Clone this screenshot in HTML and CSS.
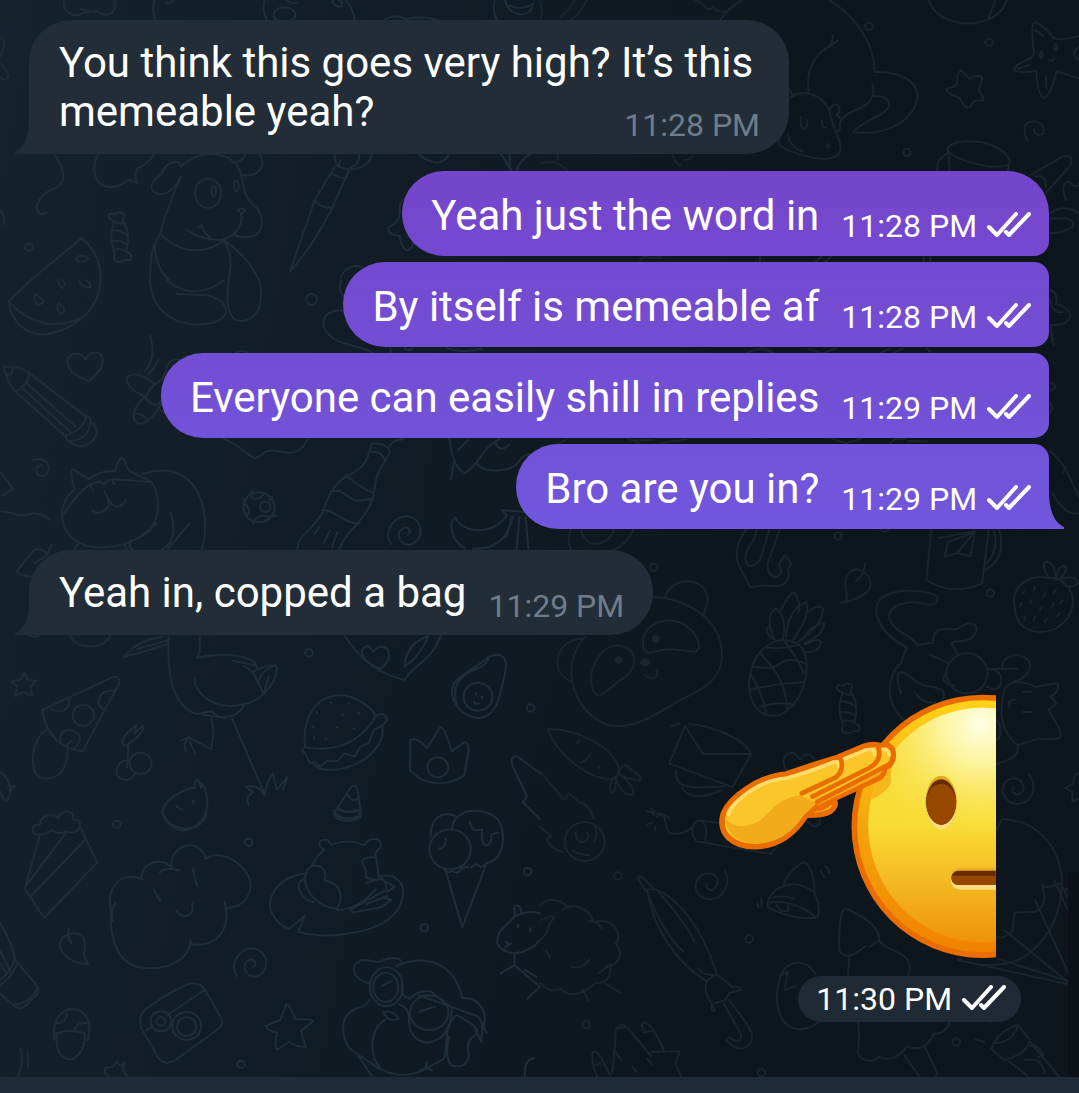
FILE: index.html
```html
<!DOCTYPE html>
<html lang="en">
<head>
    <meta charset="UTF-8">
    <meta name="viewport" content="width=device-width, initial-scale=1.0">
    <title>Chat</title>
    <link rel="stylesheet" href="styles.css">
</head>
<body>

<!-- wallpaper doodles -->
<svg class="wallpaper" viewBox="0 0 1079 1093" preserveAspectRatio="xMidYMid slice" aria-hidden="true">
    <defs>
        <path id="star" d="M0-34L11-12L36-10L18 9L24 35L-2 24L-26 36L-20 8L-37-8L-12-12Z"/>
        <path id="spiral" d="M-40 38C-62-8-22-52 14-44C60-32 56 34 14 40C-18 38-28-2 0-10C14-14 22 4 10 10"/>
        <circle id="dot" r="11"/>
        <path id="heart" d="M0-22C12-46 46-52 50-24C54 4 28 28 10 42C-22 34-56 10-52-20C-44-46-12-44 0-22Z"/>
        <path id="candy" d="M-16-46C-44-58-32-76-14-66C-4-82 22-70 8-54C8-50 6-48 12-42C28-16 26 16 18 44C42 56 38 78 16 68C-2 84-28 72-14 54C-12 48-18 46-18 40C-30 10-26-18-16-46M-16-46Q0-36 12-42M-22-20Q6-20 22-2M-24 14Q0 8 22 24M-18 40Q2 32 18 44"/>
    </defs>
    <g class="left" transform="scale(.3444 .3333)">
        <path d="M185 0C180 30 210 60 245 38L280 34C320 60 340 30 332 0M235 26Q265 40 280 32M448 0Q440 30 450 60M480 10Q496 10 504 0M768 0C762 20 766 40 775 60M830 0Q846 14 862 8M1030 60Q1026 24 1002 0"/>
        <ellipse cx="826" cy="44" rx="32" ry="22"/>
        <path d="M965 0Q966 20 990 20Q1000 8 984 0M1118 58Q1150 40 1180 58Q1220 44 1270 60M1436 0C1430 28 1436 46 1442 60M1466 0C1480 54 1536 54 1546 20M1480 16Q1510 34 1550 10"/>
        <path d="M0 112Q20 120 8 150L0 168M0 190Q24 210 24 234Q10 246 0 232M0 632Q20 650 8 674"/>
        <path d="M155 460C190 510 196 545 160 565C120 580 92 620 115 640Q124 646 134 638"/>
        <path d="M285 462C266 500 270 550 310 560Q345 566 370 540L398 548Q388 520 400 505Q432 490 448 462"/>
        <use href="#candy" x="348" y="710"/>
        <use href="#dot" x="84" y="742"/>
        <!-- dog -->
        <path d="M526 500C570 450 650 450 688 495C710 530 700 580 730 610C770 640 770 700 730 710Q700 714 684 706M526 500C520 470 480 490 470 520C430 550 430 580 470 582Q500 580 524 530M680 490Q710 480 712 462M754 462C776 500 750 530 704 526M526 530C500 590 480 640 465 700C500 740 570 780 650 722M540 688Q580 720 640 720C690 710 706 670 700 640L690 630Q700 622 712 630L700 644M575 682Q588 680 586 674Q590 700 610 712M465 700C430 760 440 800 435 840M450 740Q450 800 490 840M650 722C680 770 668 800 664 840M655 724Q720 770 752 840"/>
        <ellipse cx="604" cy="580" rx="38" ry="44"/>
        <ellipse cx="621" cy="574" rx="6" ry="16"/>
        <ellipse cx="686" cy="558" rx="6" ry="15"/>
        <!-- brush -->
        <path d="M972 462Q970 490 984 500L1010 508C1050 510 1075 490 1080 462M984 500Q985 480 990 480M1010 508Q1050 490 1042 462M972 500L914 600L842 815Q900 750 962 630L1012 514M965 520Q980 534 1006 534M914 600Q930 624 964 624"/>
        <path d="M1215 462Q1240 486 1272 488Q1300 480 1302 462M1455 462L1484 510M1480 462V500M1500 512Q1510 480 1540 462M1180 600Q1160 590 1160 640Q1158 670 1130 680Q1120 704 1160 708Q1170 760 1190 748Q1200 740 1200 720M990 830Q1010 790 1050 800"/>
        <!-- watermelon -->
        <path d="M90 840L236 715Q294 760 292 840"/>
        <ellipse cx="238" cy="776" rx="18" ry="9"/>
    </g>
    <g class="right" transform="translate(540 0) scale(.3438 .3333)">
        <path d="M0 0Q10 40 0 60M135 0Q120 40 90 60M100 0Q90 30 60 50M450 0Q478 10 484 26Q500 30 504 22Q520 40 538 34M524 60Q550 20 590 0M842 0C900 40 970 110 974 216C1040 214 1100 240 1098 290C1090 360 1010 410 910 396C940 360 1000 350 1015 320Q1020 286 966 288Q974 270 966 254M966 288C950 340 890 320 872 370M852 104Q852 126 840 140L866 122M840 140C790 170 774 220 782 280"/>
        <path d="M722 300C750 260 830 280 844 340C850 390 880 420 874 450C860 500 760 470 700 440Q690 430 700 400M844 325Q860 305 870 320Q876 335 862 345Q882 355 872 370Q878 392 860 398M758 350Q756 388 770 386Q778 384 778 360M820 360Q820 388 832 382M722 405Q724 440 764 454M722 265L738 290"/>
        <circle cx="838" cy="437" r="4"/>
        <use href="#dot" x="957" y="79"/><use href="#dot" x="1306" y="127"/><use href="#dot" x="1067" y="457"/>
        <path d="M1130 0C1160 94 1330 94 1358 0M1305 54L1325 0"/>
        <path d="M1440 66Q1426 66 1436 150Q1440 170 1420 178Q1376 196 1380 212Q1400 220 1444 212Q1446 290 1468 294Q1488 280 1502 214L1568 236M1440 66Q1470 80 1490 110Q1500 126 1568 108M1568 140Q1540 160 1568 180M1440 90L1464 108M1390 206L1424 194M1472 230V264M1480 180Q1490 186 1496 176"/>
        <ellipse cx="1458" cy="164" rx="4" ry="9"/><ellipse cx="1500" cy="142" rx="4" ry="9"/>
        <path d="M1225 212Q1238 226 1250 236Q1274 220 1287 234L1276 272Q1292 290 1288 302Q1260 296 1252 320Q1236 334 1222 294Q1180 280 1182 266Q1212 262 1214 246Q1212 216 1225 212Z"/>
        <path d="M1420 424C1400 390 1410 360 1440 364Q1474 374 1462 402Q1440 410 1436 388"/>
        <path d="M1188 440C1170 460 1240 490 1310 500Q1370 504 1366 480C1340 420 1220 410 1188 440ZM1188 460L1192 516M1366 484L1360 516M1185 460Q1150 480 1156 512M1428 524L1520 470Q1560 460 1540 500L1470 580M1440 530Q1470 520 1472 560M1530 600Q1510 550 1540 545Q1560 570 1568 550M1484 640Q1520 610 1568 640M1484 700Q1520 700 1550 680Q1560 650 1484 656"/>
        <path d="M0 490Q50 476 80 514M52 480L50 462M386 462Q390 490 410 496M420 480Q445 480 444 462M290 785Q300 765 320 774L354 772M640 770V786M800 785L820 770M846 770L830 786M1116 772V786M1136 772V786"/>
    </g>
    <g class="left" transform="translate(0 280) scale(.3444 .3333)">
        <path d="M90 0L25 64C30 130 90 176 150 160C230 140 290 80 292 0M25 64C80 130 160 150 236 114M170 0Q166 16 182 24Q194 16 182 0M230 4Q240 24 262 22Q264 8 250 0M104 42Q94 60 108 74Q132 72 122 58ZM170 70Q160 90 174 102Q192 98 184 82Z"/>
        <path d="M435 0C440 100 520 150 620 128C680 106 660 60 600 46L512 42M485 0C530 46 600 44 650 0M664 0C660 50 654 90 680 118Q720 136 750 90Q766 50 752 0"/>
        <circle cx="905" cy="58" r="16"/>
        <use href="#heart" x="248" y="260"/>
        <!-- pencil -->
        <path d="M10 260Q60 258 86 280L250 410M10 260Q22 310 44 334L192 470M86 280Q80 320 44 334M20 285Q40 284 36 266M76 308L220 440M60 320L205 456M250 410Q240 450 192 466Q190 486 205 482Q260 480 262 424Q260 404 244 406M262 424Q284 440 280 466Q250 520 200 484"/>
        <!-- plane -->
        <path d="M435 165Q456 230 422 272M460 238Q450 266 430 282M370 290C400 270 430 300 450 312Q480 300 484 260Q500 230 524 240M370 290Q360 320 420 350Q440 380 460 372Q486 350 480 310M450 312Q420 340 424 360M420 350Q380 390 390 420Q410 450 450 400L470 370M390 400Q416 400 430 424M465 390L500 412"/>
        <path d="M1030 105C990 80 930 90 940 140C960 200 1040 190 1080 218M990 0Q980 40 1005 56M1134 205V216M1175 206Q1186 214 1196 206M685 218Q704 208 720 218M1300 206Q1340 220 1400 206"/>
        <path d="M96 540Q140 530 142 568Q132 600 108 582Q100 560 120 556M0 575L38 626L6 648M0 694Q20 696 40 700Q60 712 100 700Q130 704 144 720"/>
        <!-- cat -->
        <path d="M216 628C200 570 206 560 222 574L258 598Q290 570 334 574Q350 520 358 536L374 572L440 606C466 650 466 720 430 758C340 820 240 810 205 770C170 730 170 670 216 628M186 700C220 650 250 610 290 604L304 614Q310 600 330 598L440 606M304 636Q330 680 296 696Q280 702 268 692M316 660Q340 700 366 660M264 620L270 634M326 600L332 612M414 582C480 560 540 570 576 640Q610 720 586 810M496 700Q520 780 470 810M550 730L486 810M380 780Q370 800 386 810M455 730Q400 780 382 782M238 790Q220 790 216 810M360 794L370 810"/>
        <path d="M650 476C700 500 700 510 730 530Q745 540 770 516C810 500 840 540 880 500L894 476"/>
        <!-- cookie -->
        <circle cx="752" cy="682" r="45"/><circle cx="770" cy="680" r="15"/><path d="M724 644Q740 670 765 644M708 670Q736 690 714 710M736 726Q750 700 786 712M730 632L736 642M704 656L714 660M790 650L782 660M792 710L802 706M740 724L734 732"/>
        <!-- bottle -->
        <path d="M1080 490L1072 516C1060 570 1020 580 1004 590C960 620 950 660 936 700C900 760 860 770 864 808M1080 490Q1130 490 1132 520L1118 544C1090 580 1090 610 1084 650C1060 730 1010 740 986 806M1072 516Q1110 510 1118 544M1004 584Q1040 620 1082 638M960 636C1000 620 1010 664 1040 662L1082 656M936 690C980 690 990 730 1044 730M928 740L912 764M958 752L940 790M980 756L964 800M1130 500Q1140 480 1170 478"/>
        <use href="#spiral" transform="translate(1174 754)"/>
        <path d="M1305 476C1310 520 1320 570 1350 578C1390 560 1400 500 1450 478M1310 596L1318 545M1384 550C1400 580 1490 580 1510 540Q1520 520 1550 522M1440 490Q1450 520 1478 494M1330 510L1360 480M1350 806C1310 780 1300 730 1322 712C1340 760 1430 770 1472 706L1456 690L1568 700M1374 806C1430 810 1480 780 1484 710M1500 806L1508 712M1470 770L1490 710M1534 806L1526 712"/>
    </g>
    <g class="right" transform="translate(540 280) scale(.3438 .3333)">
        <path d="M1484 30Q1510 40 1500 72Q1540 80 1542 110Q1530 140 1484 134L1494 196M1484 60Q1490 100 1520 96M1484 310Q1500 310 1498 326L1484 330M1484 370Q1496 380 1484 396M1484 514C1530 550 1550 620 1568 650M1530 560L1520 580M1490 640Q1530 710 1568 700"/>
        <path d="M605 218Q640 198 680 218M780 206L820 220L860 206M990 218L1020 206M1030 218L1055 206M1126 206L1136 216M255 476L290 490M275 480H330M350 490L425 478M0 500Q50 500 76 478M850 476L890 490L934 476M1020 490Q1030 470 1060 478M1070 484H1125"/>
        <path d="M90 747C76 780 86 830 120 832Q240 830 272 747M120 750Q130 796 170 792Q210 780 214 747"/>
        <path d="M600 747C570 790 560 830 590 880L612 922L655 916C720 930 730 890 720 870L732 850L712 826L694 854Q710 870 690 892Q660 890 662 850L698 747M630 747Q630 770 610 796C580 850 610 880 640 840L668 747"/>
        <circle cx="867" cy="768" r="11"/>
        <path d="M1138 747L1124 900Q1200 950 1286 910L1305 747M1335 747Q1360 830 1296 870M1320 750Q1336 810 1300 850M1160 774L1265 754L1252 828L1212 820L1178 830L1186 786M1186 786L1262 758L1212 820M990 750Q1005 762 1015 748"/>
    </g>
    <g class="left" transform="translate(0 540) scale(.3444 .3333)">
        <path d="M48 96Q80 50 100 30Q120 20 136 44L150 14M48 96Q60 108 95 110M100 70L140 44M205 288C220 330 300 330 320 288M84 286Q100 294 112 286"/>
        <use href="#star" x="70" y="432"/>
        <!-- pizza -->
        <path d="M122 510L330 410Q350 410 346 430L240 634Q140 620 122 510ZM140 500Q160 520 184 512Q206 500 198 476M332 452Q290 450 286 486Q290 506 306 510M176 604Q170 572 202 570Q240 580 230 606L214 628M140 566C90 590 80 700 120 714C180 726 200 670 196 614L208 602"/>
        <ellipse cx="242" cy="526" rx="31" ry="32"/>
        <!-- cherries -->
        <path d="M368 684L374 610Q400 596 414 570V556L392 580L396 556Q350 590 356 610Q362 620 374 616"/>
        <ellipse cx="408" cy="670" rx="32" ry="32"/><path d="M376 664C340 654 330 700 346 714Q380 730 392 700"/>
        <path d="M0 694Q30 720 30 750Q26 790 12 780L0 754M24 740L46 738L28 752"/>
        <!-- stork -->
        <path d="M360 350Q400 300 470 290M360 350Q440 330 488 312M400 326L486 302M490 288C484 400 500 500 570 522L614 514L634 530Q690 536 708 496M580 288V334L572 354Q680 330 740 366L748 388Q790 370 804 380Q806 420 766 462C720 510 600 520 566 430V414M675 362L744 376M748 386L734 396L708 378M734 396L766 462M750 424Q756 396 790 380M766 462L780 410M590 524L656 534M614 534L620 580L614 628L548 592L524 602M548 592Q530 610 540 636M550 602Q556 620 566 638M674 536L768 762M768 766Q750 730 712 742L736 756Q710 770 722 796M768 766Q776 720 792 700L804 750L834 712L822 750"/>
        <use href="#dot" x="897" y="338"/><use href="#dot" x="1541" y="504"/>
        <path d="M1000 286C1050 370 1110 406 1176 420C1190 380 1250 370 1280 286M1104 386C1040 360 1040 320 1070 318L1084 336Q1100 310 1124 326Q1140 360 1104 386M1174 380Q1180 310 1244 288Q1220 350 1174 380Z"/>
        <!-- avocado -->
        <path d="M1420 350C1470 330 1476 370 1464 410C1450 480 1440 530 1390 534C1330 530 1300 470 1318 430C1340 400 1390 380 1420 350ZM1420 350Q1416 376 1380 388C1330 410 1310 440 1328 500"/>
        <circle cx="1388" cy="470" r="42"/>
        <path d="M1376 486Q1380 494 1390 490M1382 460V464M1400 470V474"/>
        <!-- burger -->
        <path d="M886 622C876 530 920 460 1000 466Q1060 480 1092 526C1060 590 1000 630 920 626ZM1092 526Q1120 514 1124 540L1106 560M886 622Q870 630 886 640L900 670L914 664L930 680L950 662L980 664L1000 640L1030 650L1046 620L1070 610L1086 570L1110 556Q1120 610 1056 660C1000 694 930 700 908 670M920 516V520M960 488H964M1010 490H1014M994 524H998M1040 520H1044M910 558V562M976 562H980M1026 566H1030M912 592V596M944 596H948"/>
        <!-- crown -->
        <path d="M1192 600Q1210 590 1240 624L1278 562Q1290 560 1312 634L1350 606Q1362 610 1360 634L1348 706C1300 740 1230 740 1190 690Z"/>
        <circle cx="1271" cy="682" r="30"/>
        <!-- strawberry -->
        <path d="M566 742C530 750 470 780 472 820C490 870 530 880 560 864C600 840 610 790 596 750M566 746Q560 720 576 720L584 744M584 744V730L598 748M512 796Q520 812 530 808M564 780L558 790"/>
        <!-- candy corn -->
        <path d="M1022 738Q1036 730 1040 760L1048 826C1030 850 980 850 970 820ZM1008 760Q1020 790 1040 776M980 800Q1000 826 1044 812M970 820Q1000 846 1046 832"/>
        <path d="M1568 700L1500 648Q1480 650 1488 676L1530 770L1518 786L1568 838"/>
    </g>
    <g class="right" transform="translate(540 540) scale(.3438 .3333)">
        <use href="#dot" x="331" y="82"/><use href="#dot" x="1310" y="159"/>
        <!-- panda -->
        <path d="M325 172C420 170 540 240 528 360C520 440 440 460 390 490C330 530 260 570 200 556C120 530 60 420 110 320L130 290M362 175C380 100 500 110 486 190L476 224M120 296C50 300 20 390 90 424M300 320C290 260 360 220 420 254C470 290 470 330 450 336C400 330 370 320 324 338Q304 340 300 320M220 316C280 320 290 370 250 410C210 430 190 470 166 466C130 440 150 330 220 316M340 390Q346 414 326 414Q310 412 306 404"/>
        <circle cx="337" cy="296" r="8" class="dot"/><circle cx="229" cy="360" r="8" class="dot"/><ellipse cx="306" cy="367" rx="12" ry="9" class="dot"/>
        <path d="M0 694L70 780L84 760L114 786Q140 790 156 836"/>
        <!-- leaf -->
        <path d="M874 188Q900 190 890 150C880 100 910 80 934 92C970 110 970 150 940 164Q910 186 874 188M946 70Q940 110 918 124"/>
        <!-- pineapple -->
        <path d="M684 304C620 330 590 420 620 490C640 530 690 540 720 510C770 470 790 380 764 326Q730 290 684 304ZM660 322Q700 330 754 314M620 380Q680 390 700 370T772 370M608 450Q690 430 768 426M640 500Q690 484 740 494M706 296Q740 340 768 400M640 340Q720 420 718 510M612 400Q660 490 656 524"/>
        <path d="M684 304C650 230 680 200 690 208Q720 240 706 296M700 212Q730 150 740 158Q764 200 750 220M716 290Q720 210 774 186Q790 220 736 300M780 216Q810 190 824 206Q820 260 750 306M764 300Q790 250 828 250Q820 290 770 310M770 314Q810 290 818 308Q810 340 770 336M664 260Q650 270 674 296"/>
        <use href="#candy" x="896" y="504"/>
        <!-- carrot and letter -->
        <path d="M22 568C90 560 220 620 230 690Q230 720 190 718C120 700 50 640 22 568ZM116 600L106 612M146 642Q140 660 118 668M172 680V684M234 686Q250 664 264 690Q300 710 290 722Q260 720 228 702M228 702Q280 740 270 764Q240 770 220 714M212 718Q196 744 210 760Q224 750 220 714"/>
        <path d="M422 558L376 670L560 742L614 642C600 600 500 556 434 552M422 558L474 642H614M382 558L404 552M396 690C390 740 420 750 540 738M414 744Q440 790 530 750M740 640C700 630 700 690 730 700M740 640L756 658Q780 630 800 660"/>
        <!-- cat on the back -->
        <path d="M1066 322C990 280 960 220 990 176C1030 140 1130 150 1156 170Q1160 200 1120 192C1080 180 1010 190 1016 236C1030 280 1080 280 1096 314L1144 308C1140 260 1180 264 1210 268L1244 250Q1280 250 1266 280C1250 310 1220 300 1196 308L1214 342M1066 322L1050 370C1010 400 1000 490 1060 540M1050 460Q1030 400 1050 396C1080 400 1090 440 1140 440Q1190 450 1170 480L1150 500M1092 460Q1110 490 1150 488M1134 344L1190 370"/>
        <circle cx="1242" cy="400" r="60"/>
        <path d="M1180 400Q1160 430 1204 436M1302 386Q1350 390 1340 430Q1330 460 1300 440M1344 380C1350 330 1420 340 1424 370C1430 400 1400 420 1380 424M1302 386H1390M1350 450C1370 410 1420 430 1440 440L1506 430Q1510 460 1484 470L1504 490L1480 510C1500 550 1520 570 1512 594Q1480 600 1450 596L1390 616C1330 570 1340 500 1350 450M1388 620Q1400 650 1330 672M1404 455H1430M1404 516H1430M1366 500Q1360 476 1384 480M1330 540Q1350 580 1330 600"/>
        <!-- strawberry -->
        <path d="M1480 115C1430 100 1370 130 1380 200C1384 270 1440 290 1500 266C1560 230 1560 160 1530 136Q1510 110 1480 115ZM1480 115C1460 80 1460 60 1480 66Q1500 80 1500 116Q1510 70 1530 80Q1530 110 1500 120Q1560 100 1564 130Q1540 150 1520 130M1410 150L1404 160M1440 140L1436 150M1470 160L1464 170M1500 150L1494 160M1400 190L1396 200M1430 180L1426 190M1460 200L1454 210M1494 190L1488 200M1520 180L1514 190M1410 230V240M1440 230L1436 240M1474 236L1468 246M1510 220L1504 230"/>
        <path d="M1422 704C1450 740 1430 790 1390 792C1340 790 1330 730 1370 716C1410 710 1420 760 1386 764Q1366 756 1378 742M1568 700Q1550 700 1552 730L1528 744L1548 756V784L1568 776"/>
        <path d="M310 814L330 820M324 806L334 816M340 830Q360 816 376 836"/>
    </g>
    <g class="left" transform="translate(0 810) scale(.3444 .3333)">
        <path d="M104 74C84 60 100 40 116 46C116 10 160 10 168 24C180 -6 220 0 212 28Q240 30 230 54Q220 74 192 64Q170 76 150 60Q130 76 104 74ZM116 74L72 236L128 324L282 158L234 54M192 68L76 226M248 88L92 256"/>
        <use href="#dot" x="339" y="43"/><use href="#dot" x="722" y="97"/><use href="#dot" x="1532" y="185"/><use href="#dot" x="1232" y="353"/><use href="#dot" x="700" y="763"/>
        <!-- cloud -->
        <path d="M416 208C340 180 310 240 322 300C316 380 340 470 420 474C490 480 550 450 554 390M328 334Q320 300 336 278M410 208C410 150 480 140 498 176C490 100 580 80 598 146C640 110 730 170 728 230C720 280 690 290 656 296M652 276C670 350 640 410 556 404M464 188Q480 170 520 182M446 238L466 274M560 178L572 228M512 302C530 330 566 320 558 280"/>
        <path d="M968 0Q990 40 1040 20L1048 0M470 0Q480 50 540 56Q600 50 600 0M980 0Q1010 10 1040 0"/>
        <!-- bear in a ring -->
        <path d="M940 118C916 100 930 86 950 90L962 104Q1010 84 1058 106C1070 80 1110 80 1106 108L1090 130L1100 200M940 118Q920 140 904 168C940 160 950 190 942 210C990 220 1000 260 978 296C900 290 860 200 904 168M1090 142C1040 140 1050 160 1060 176L1064 204L1094 210Q1120 196 1122 240L1016 300L1026 308L1110 290L1136 270L1112 262M1122 216L1146 230L1124 246M1064 218L1110 204M1064 282L1124 258M978 300Q1040 300 1092 236M892 190C800 200 770 270 790 310Q810 350 840 356L884 318L866 366C960 390 1120 370 1160 290C1190 220 1150 190 1104 198M886 208C850 210 870 270 910 276"/>
        <!-- ice cream -->
        <path d="M1250 80C1250 20 1290 0 1326 20M1312 56C1320 -20 1440 -10 1456 50C1470 110 1450 150 1414 160L1396 172L1384 162L1368 172M1296 190L1342 352L1412 162M1290 180Q1306 194 1310 180Q1330 198 1340 174L1360 170M1364 36Q1370 70 1400 58Q1396 108 1414 106Q1430 100 1426 74L1446 68M1294 86Q1294 114 1276 116"/>
        <circle cx="1307" cy="118" r="60"/>
        <path d="M0 340Q40 410 44 450L110 530Q118 550 90 570Q60 610 36 584L0 550M50 460Q30 510 0 524M44 444Q30 490 0 510M0 420L30 484M0 460L20 492M110 530Q90 580 40 584"/>
        <path d="M256 462C190 460 160 410 180 386C200 364 230 366 240 380C260 410 230 430 256 462M200 354Q194 380 208 402M158 690C150 630 180 590 220 598C260 610 264 650 256 690L246 688M164 670Q200 656 246 670C250 720 220 750 200 748C160 740 166 700 164 670M164 640Q190 640 194 612M256 640Q220 634 216 664M60 714Q70 760 52 800M80 726L82 774M316 800Q300 790 306 774L326 770L340 754Q350 780 362 754L356 780L370 800"/>
        <use href="#spiral" transform="translate(726 460)"/>
        <!-- camera -->
        <path d="M420 600Q500 540 548 522Q580 514 596 540L640 620Q654 644 630 660L510 750Q480 770 460 744L410 654Q400 620 420 600ZM594 540L490 612M426 660L442 650"/>
        <circle cx="467" cy="634" r="30"/><circle cx="467" cy="634" r="13"/><circle cx="542" cy="648" r="42"/><circle cx="542" cy="650" r="28"/>
        <path d="M832 582Q840 582 858 628Q906 626 908 634L874 664L888 710Q860 712 840 696L804 720Q796 710 804 668Q770 660 772 648L814 630Z"/>
        <!-- dog with goggles -->
        <path d="M1070 520C1010 500 1020 450 1060 450L1100 456Q1160 430 1170 462L1160 466M1150 468C1240 430 1320 460 1342 564C1400 560 1420 620 1400 660M1074 570Q1060 590 1040 594C980 610 990 690 1020 720L1104 778M1120 628C1070 660 1070 740 1110 780Q1170 810 1230 780L1290 746M1040 738L1080 798M1290 746C1300 700 1290 640 1326 616M1330 618C1370 640 1400 660 1380 676Q1350 690 1362 740Q1350 780 1310 766Q1290 740 1304 680M1398 696L1380 660M1412 668L1390 620L1216 556M1400 640Q1400 680 1396 696M1240 756L1236 774L1256 782M1236 774L1220 780M1112 606Q1140 600 1158 626Q1130 640 1112 606"/>
        <ellipse cx="1122" cy="530" rx="48" ry="58"/><ellipse cx="1120" cy="532" rx="36" ry="44"/><ellipse cx="1246" cy="608" rx="56" ry="52"/>
        <path d="M1168 520Q1160 560 1190 566Q1210 540 1250 544L1312 594Q1310 690 1240 698Q1190 690 1188 636Q1190 590 1160 584M1110 528L1138 512M1220 604L1264 590"/>
        <path d="M1568 310C1540 300 1510 310 1494 320V290Q1510 280 1514 306M1494 320C1470 350 1440 360 1444 400C1460 440 1530 440 1568 390M1494 432V466L1454 490M1494 466L1568 530L1532 566M1524 480L1556 500M1468 394L1478 404L1466 412M1484 400L1476 404M1504 344V350M1540 354V364M1550 744Q1520 750 1524 798"/>
    </g>
    <g class="right" transform="translate(540 810) scale(.3438 .3333)">
        <circle cx="130" cy="95" r="58"/>
        <path d="M104 66Q104 98 126 96Q146 90 138 66M94 120Q110 134 144 136M160 50Q170 76 156 96M148 0L156 26M0 50L34 80L20 86Q30 120 68 126"/>
        <!-- dynamite -->
        <path d="M340 12C380 0 350 70 390 72Q420 72 444 52M312 44L326 38M330 14L322 4M334 50L336 60M470 32Q440 30 444 70Q450 100 470 96L670 132L690 110M470 32Q490 50 480 90M470 32L530 40M780 36Q800 60 814 40V20"/>
        <use href="#dot" x="227" y="198"/><use href="#dot" x="609" y="387"/><use href="#dot" x="134" y="644"/><use href="#dot" x="1211" y="696"/><use href="#dot" x="644" y="788"/>
        <path d="M536 180C560 220 530 270 490 268C440 260 440 194 490 190C530 190 520 244 494 240Q480 232 486 220"/>
        <!-- bell -->
        <path d="M752 166Q766 148 780 166Q800 200 798 248M752 166Q716 190 706 230M706 230C670 240 650 290 670 296C720 320 770 330 806 322Q820 300 798 248Q750 210 706 230M670 276Q740 270 800 320M680 262Q710 256 740 266M688 284Q700 310 722 302V284M816 182L826 202M830 168Q844 184 840 190M644 264V290M632 280L636 292"/>
        <!-- umbrella -->
        <path d="M284 204Q290 190 304 208L330 236L306 240ZM330 236C400 260 470 350 514 490L484 514C400 460 330 360 312 244M316 256C340 320 370 380 416 424M340 240C390 300 430 350 450 396M460 476Q480 500 510 494M484 514Q476 550 500 580L508 602Q494 606 500 586M514 494Q550 520 560 532Q580 524 584 540L550 550L540 570L510 580M550 570C600 640 630 670 612 700Q580 736 542 690Q550 676 562 690Q590 700 584 670Q550 610 534 580"/>
        <!-- sheep -->
        <path d="M0 286C20 260 70 270 74 290C120 280 150 310 156 336C220 320 240 380 220 400C250 440 220 460 204 470C210 510 180 520 160 520C120 560 80 560 60 536Q30 550 0 520M64 300Q80 290 92 290M140 334Q170 330 180 358M0 330L30 320Q50 316 36 330Q20 350 20 370L0 390M90 470Q120 480 144 448M16 420L30 444M188 520L234 548M124 540L142 574M172 490L204 462"/>
        <path d="M152 730Q160 716 176 740L204 796M152 730Q150 760 166 800M162 766L176 760M210 790Q220 700 220 660Q236 630 260 660L324 740M224 656L246 652M216 720L236 750M300 660Q290 640 306 636Q330 650 360 720M302 668L326 662M324 726L406 724L394 760L410 798M312 746L326 764M268 770L280 786"/>
        <!-- egg, ice lolly -->
        <path d="M800 490C770 440 710 450 696 510C680 570 690 650 750 658Q790 656 810 636M696 498L720 486L712 540L746 528M876 316Q880 290 900 300C940 320 990 350 986 390L960 410M876 316Q866 390 872 424Q890 450 926 424L946 410M900 436L896 498M986 392C1010 430 1080 420 1076 480L1070 498M926 636Q930 700 924 730Q940 760 974 750L984 740Q1020 760 1060 720L1064 710Q1120 730 1146 672Q1190 670 1194 620M1060 736L1104 800M1120 712L1156 790L1150 800"/>
        <!-- parachute -->
        <path d="M1344 28C1440 30 1510 100 1518 210C1520 340 1440 460 1330 464Q1270 470 1216 446M1344 28L1328 60M1510 220Q1470 240 1460 224Q1480 290 1440 306L1380 308L1374 366Q1340 390 1330 380M1496 210L1568 376M1514 220L1568 330M1440 270L1550 520M1350 360L1540 520M1330 446L1568 524M1216 450L1568 530M1530 236L1568 290"/>
        <!-- torch -->
        <path d="M1320 700Q1340 660 1390 644L1424 690C1420 720 1390 740 1350 750L1312 716ZM1320 700Q1370 700 1390 650M1424 694L1510 800M1360 750L1420 800M1424 708Q1450 700 1464 736L1448 742M1410 750Q1460 740 1468 790M1266 688L1292 696M1300 626L1312 636M1362 586L1368 612"/>
    </g>
    <rect class="scrollbar" x="1068" y="872" width="11" height="205"/>
</svg>

<main class="chat">
    <div class="message incoming tail">
        <span>You think this goes very high? It’s this memeable yeah?</span>
        <span class="meta">11:28 PM</span>
        <svg class="tail-shape" viewBox="0 0 15 34"><path d="M15 0V34H0Q-1 32 2 31Q14 24 14 0Z"/></svg>
    </div>

    <div class="group">
        <div class="message outgoing">
            <span>Yeah just the word in</span>
            <span class="meta">11:28 PM <svg class="checks" viewBox="1 0 44 25"><path d="M3 15L11 23L30 2M20 20L23 23L43 2"/></svg></span>
        </div>
        <div class="message outgoing">
            <span>By itself is memeable af</span>
            <span class="meta">11:28 PM <svg class="checks" viewBox="1 0 44 25"><path d="M3 15L11 23L30 2M20 20L23 23L43 2"/></svg></span>
        </div>
        <div class="message outgoing">
            <span>Everyone can easily shill in replies</span>
            <span class="meta">11:29 PM <svg class="checks" viewBox="1 0 44 25"><path d="M3 15L11 23L30 2M20 20L23 23L43 2"/></svg></span>
        </div>
        <div class="message outgoing tail">
            <span>Bro are you in?</span>
            <span class="meta">11:29 PM <svg class="checks" viewBox="1 0 44 25"><path d="M3 15L11 23L30 2M20 20L23 23L43 2"/></svg></span>
            <svg class="tail-shape" viewBox="0 0 15 34"><path d="M0 0V34H15Q16 32 13 31Q1 24 0 0Z"/></svg>
        </div>
    </div>

    <div class="message incoming tail">
        <span>Yeah in, copped a bag</span>
        <span class="meta">11:29 PM</span>
        <svg class="tail-shape" viewBox="0 0 15 34"><path d="M15 0V34H0Q-1 32 2 31Q14 24 14 0Z"/></svg>
    </div>

    <div class="sticker-message">
        <svg class="sticker" viewBox="60 40 830 792" role="img" aria-label="Saluting face">
            <defs>
                <linearGradient id="rim" x1="0" y1="0" x2="0" y2="1">
                    <stop offset="0" stop-color="#ffd21a"/>
                    <stop offset=".5" stop-color="#f5a50c"/>
                    <stop offset="1" stop-color="#f08200"/>
                </linearGradient>
                <linearGradient id="skin" x1="0" y1="0" x2="0" y2="1">
                    <stop offset="0" stop-color="#f8e04a"/>
                    <stop offset=".5" stop-color="#f9dc33"/>
                    <stop offset=".75" stop-color="#f4b822"/>
                    <stop offset="1" stop-color="#ee9208"/>
                </linearGradient>
                <radialGradient id="shine" gradientUnits="userSpaceOnUse" cx="845" cy="130" r="360">
                    <stop offset="0" stop-color="#fffee8"/>
                    <stop offset=".35" stop-color="#fdf7a8" stop-opacity=".85"/>
                    <stop offset="1" stop-color="#f9e040" stop-opacity="0"/>
                </radialGradient>
                <clipPath id="face"><ellipse cx="850" cy="433" rx="343" ry="352"/></clipPath>
            </defs>
            <ellipse cx="850" cy="437" rx="393" ry="395" fill="#e96d00"/>
            <ellipse cx="850" cy="437" rx="376" ry="378" fill="url(#rim)"/>
            <ellipse cx="850" cy="433" rx="343" ry="352" fill="url(#skin)"/>
            <ellipse cx="850" cy="433" rx="343" ry="352" fill="url(#shine)"/>
            <!-- shadow of the hand -->
            <path clip-path="url(#face)" fill="#f4b81c" d="M480 240L560 230L580 254Q572 280 576 300Q572 335 500 364Z"/>
            <!-- eye -->
            <ellipse cx="726" cy="365" rx="47" ry="80" fill="#e3aa1c"/>
            <ellipse cx="726" cy="372" rx="45" ry="74" fill="#ffdc80"/>
            <ellipse cx="726" cy="364" rx="45" ry="68" fill="#662900"/>
            <path fill="#964700" d="M682 350Q696 310 726 310T770 350C776 400 750 432 726 432S676 400 682 350Z"/>
            <!-- mouth -->
            <path fill="#e8b020" d="M890 562H782Q758 564 756 590H890Z"/>
            <path fill="#ffdc80" d="M890 627H782Q756 626 755 596H890Z"/>
            <path fill="#662900" d="M890 570H778A21 21 0 0 0 778 613H890Z"/>
            <path fill="#964700" d="M890 585H758Q754 610 778 613H890Z"/>
            <!-- thumb below the palm -->
            <path fill="#fbb52a" stroke="#e96d00" stroke-width="16" stroke-linejoin="round" d="M330 404Q372 404 394 392Q412 378 408 364L350 370Z"/>
            <path fill="#fbc84a" stroke="#e96d00" stroke-width="9" d="M346 388Q370 390 394 368"/>
            <!-- hand -->
            <path fill="#fac62a" stroke="#e96d00" stroke-width="17" stroke-linejoin="round" d="M262 280C180 286 90 350 72 400C56 460 100 498 170 498C230 496 280 466 318 408L356 376L540 292Q556 280 556 262L570 254Q588 236 580 208Q566 184 546 196Q524 186 492 198L410 232Q330 256 262 280Z"/>
            <path fill="#f2ab1b" d="M80 418C120 450 160 440 200 400Q250 350 300 344L354 366L314 404C270 470 220 488 168 488C120 488 84 462 80 418Z"/>
            <path fill="#fac62a" d="M80 400Q90 370 130 344L290 300L290 344C240 350 220 390 180 422Q120 450 84 418Z"/>
            <path fill="none" stroke="#ffdd6c" stroke-width="11" stroke-linecap="round" d="M88 400C110 350 190 296 264 292Q340 270 404 244Q422 242 420 258M436 234L500 208Q530 202 526 222M550 206Q570 204 570 222"/>
            <path fill="#f5a91c" d="M356 374L536 286Q550 276 554 262L346 356Z"/>
            <path fill="none" stroke="#e96d00" stroke-width="14" stroke-linecap="round" stroke-linejoin="round" d="M308 338L410 290Q434 272 426 238M340 348L510 262Q544 244 540 210L536 196M354 364L572 250"/>
        </svg>
        <span class="pill">11:30 PM <svg class="checks" viewBox="1 0 44 25"><path d="M3 15L11 23L30 2M20 20L23 23L43 2"/></svg></span>
    </div>
</main>

<footer class="bottom-bar"></footer>

</body>
</html>
```

FILE: styles.css
```css
* {
    box-sizing: border-box;
}
body {
    position: relative;
    display: flex;
    flex-direction: column;
    min-height: 100vh;
    margin: 0;
    font-family: Roboto, sans-serif;
    color: #fff;
    background: linear-gradient(100deg, #15222f 0%, #111b24 40%, #0e161d 65%, #0e161d 100%);
    overflow-x: hidden;
}

/* wallpaper */
.wallpaper {
    position: absolute;
    top: 0;
    left: 0;
    width: 100%;
    height: 100%;
}
.wallpaper g,
.wallpaper defs {
    fill: none;
    stroke-width: 2px;
    stroke-linecap: round;
    stroke-linejoin: round;
}
.wallpaper path,
.wallpaper circle,
.wallpaper ellipse {
    vector-effect: non-scaling-stroke;
}
.wallpaper .left {
    stroke: #1f2d38;
}
.wallpaper .right {
    stroke: #1a242d;
}
.wallpaper .dot {
    fill: #1a242d;
}
.wallpaper .scrollbar {
    fill: #0b1117;
}

/* messages */
.chat {
    position: relative;
    flex: 1;
    display: flex;
    flex-direction: column;
    align-items: flex-start;
    padding: 20px 30px 54px 29px;
}
.group {
    align-self: stretch;
    display: flex;
    flex-direction: column;
    align-items: flex-end;
    gap: 6px;
    margin: 17px 0 21px;
}
.message {
    position: relative;
    max-width: 900px;
    padding: 18px 29px 18px 30px;
    border-radius: 42px;
    font-size: 42px;
    line-height: 49px;
}
.incoming {
    max-width: 760px;
    background-color: #222d38;
    border-bottom-left-radius: 0;
}
.outgoing {
    padding: 20px 18px 16px 29px;
    background: linear-gradient(#7545cb 170px, #7057dd 530px) fixed;
    border-top-right-radius: 15px;
    border-bottom-right-radius: 15px;
}
.outgoing:first-child {
    border-top-right-radius: 42px;
}
.outgoing.tail {
    border-bottom-right-radius: 0;
}
.meta {
    float: right;
    margin: 24px 0 -3px 22px;
    font-size: 32px;
    line-height: 28px;
    color: #6f7d8b;
}
.outgoing .meta {
    margin: 21px 0 0 22px;
    color: #fff;
}
.checks {
    width: 44px;
    height: 25px;
    margin-left: 2px;
    fill: none;
    stroke: #fff;
    stroke-width: 4px;
    stroke-linecap: round;
    stroke-linejoin: round;
}
.tail-shape {
    position: absolute;
    bottom: 0;
    width: 15px;
    height: 34px;
}
.incoming .tail-shape {
    left: -14px;
    fill: #222d38;
}
.outgoing .tail-shape {
    right: -15px;
    fill: #7057dd;
}

/* sticker */
.sticker-message {
    align-self: flex-end;
    display: flex;
    flex-direction: column;
    align-items: flex-end;
    gap: 18px;
    margin: 59px 28px 0 0;
}
.sticker {
    width: 277px;
    height: 264px;
    margin-right: 25px;
}
.pill {
    padding: 4px 15px 4px 18px;
    border-radius: 23px;
    font-size: 32px;
    line-height: 38px;
    background-color: rgba(34, 44, 57, .9);
}

.bottom-bar {
    position: relative;
    height: 16px;
    background-color: #202b3a;
}
```
